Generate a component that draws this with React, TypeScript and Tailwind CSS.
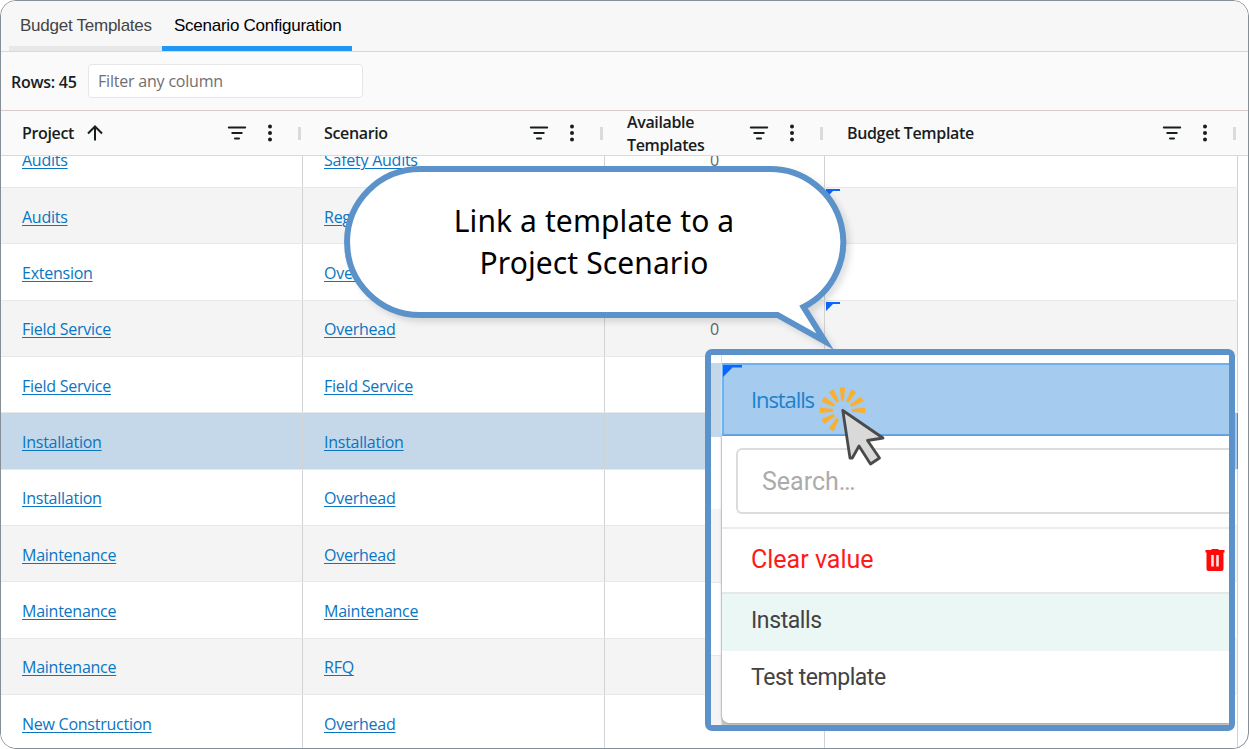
import React from 'react';
import clsx from 'clsx';

interface Row {
  project: string;
  scenario: string;
  available?: string;
  flagged?: boolean;
  selected?: boolean;
}

const rows: Row[] = [
  { project: 'Audits', scenario: 'Safety Audits', available: '0' },
  { project: 'Audits', scenario: 'Regulatory', flagged: true },
  { project: 'Extension', scenario: 'Overhead' },
  { project: 'Field Service', scenario: 'Overhead', available: '0', flagged: true },
  { project: 'Field Service', scenario: 'Field Service' },
  { project: 'Installation', scenario: 'Installation', selected: true },
  { project: 'Installation', scenario: 'Overhead' },
  { project: 'Maintenance', scenario: 'Overhead' },
  { project: 'Maintenance', scenario: 'Maintenance' },
  { project: 'Maintenance', scenario: 'RFQ' },
  { project: 'New Construction', scenario: 'Overhead' },
];

const rays = [0, 30, 60, 90, 120, 150, 180, 210, 240];

function FilterIcon() {
  return (
    <svg width="20" height="16" viewBox="0 0 20 16" stroke="#181d1f" strokeWidth="2" strokeLinecap="round">
      <path d="M1.8 2.5h16.4M5.3 8h9.4M8 13.5h4" />
    </svg>
  );
}

function MenuIcon() {
  return (
    <svg width="4" height="18" viewBox="0 0 4 18" fill="#181d1f">
      <circle cx="2" cy="2.5" r="2" />
      <circle cx="2" cy="9" r="2" />
      <circle cx="2" cy="15.5" r="2" />
    </svg>
  );
}

function HeaderCell({ className, children }: { className: string; children: React.ReactNode }) {
  return (
    <div className={clsx('flex shrink-0 items-center', className)}>
      <div className="flex flex-1 items-center gap-[13px] leading-[23px]">{children}</div>
      <FilterIcon />
      <div className="ml-[21px] mr-[26px] flex">
        <MenuIcon />
      </div>
      <div className="h-[13px] w-[3px] bg-[#dadada]" />
    </div>
  );
}

function LinkCell({ text }: { text: string }) {
  return (
    <div className="flex w-[302px] shrink-0 items-center border-r border-[#d0d2d4] pl-[21px] pt-0.5">
      <a className="whitespace-nowrap text-[#0a75c2] underline decoration-1 underline-offset-2">{text}</a>
    </div>
  );
}

function GridRow({ row, odd }: { row: Row; odd: boolean }) {
  return (
    <div
      className={clsx(
        'flex h-[56.36px] w-[1237px] shrink-0 border-b border-[#e8e8e8]',
        row.selected ? 'bg-[#c4d8e9]' : odd ? 'bg-[#f4f4f4]' : 'bg-white',
      )}
    >
      <LinkCell text={row.project} />
      <LinkCell text={row.scenario} />
      <div className="flex w-[220px] shrink-0 items-center justify-center border-r border-[#d0d2d4] pt-0.5 text-[#5f6368]">
        {row.available}
      </div>
      <div
        className={clsx(
          'flex-1 border-r pl-px pt-px',
          row.selected ? 'border-[#2196f3] bg-[#a5cbee]' : 'border-[#d0d2d4]',
        )}
      >
        {row.flagged && (
          <svg width="14" height="9" viewBox="0 0 14 9" fill="#0a66ff">
            <path d="M0 0h14v2H7L0 9z" />
          </svg>
        )}
      </div>
    </div>
  );
}

function Callout() {
  return (
    <div className="absolute left-[343px] top-[165px] h-[190px] w-[520px]">
      <svg
        className="absolute inset-0 drop-shadow-[4px_4px_3px_rgba(0,0,0,0.12)]"
        width="520"
        height="190"
        viewBox="343 165 520 190"
      >
        <path
          d="M420 169H770A73 73 0 0 1 803.5 307L825 341.500L777.500 315H420A73 73 0 0 1 420 169Z"
          fill="#fff"
          stroke="#5b92ca"
          strokeWidth="6"
          strokeMiterlimit="8"
        />
      </svg>
      <p className="relative w-[502px] pt-[35px] text-center font-['Noto_Sans','Open_Sans',sans-serif] text-[30px] leading-[42px] text-black">
        <span className="tracking-[0.1px]">Link a template to a</span>
        <br />
        <span className="tracking-[0.1px]">Project Scenario</span>
      </p>
    </div>
  );
}

function TrashIcon() {
  return (
    <svg width="20" height="22" viewBox="0 0 20 22">
      <path d="M.5 1H6l1-1h6l1 1h5.500v2.500H18.500V20q0 2-2 2h-13q-2 0-2-2V3.500H.5z" fill="#ff0a0a" />
      <path d="M7.500 6v11.500M12.500 6v11.500" stroke="#ffe1e1" strokeWidth="2.600" />
    </svg>
  );
}

function ClickCursor() {
  return (
    <svg className="absolute left-[814px] top-[381px]" width="76" height="90" viewBox="814 381 76 90">
      <g fill="#faaf2f">
        {rays.map((angle) => (
          <path
            key={angle}
            d="M9.500 -1.400L22.700 -2.700V2.700L9.500 1.400Z"
            transform={`translate(842.500 410.300) rotate(${-angle})`}
          />
        ))}
      </g>
      <path
        d="M842.800 410.500L883 438L867.500 440.500L879.500 458L870.500 464L859 446L852.300 458L850 458Z"
        fill="#d9d9d9"
        stroke="#4a4a4a"
        strokeWidth="2.800"
        strokeLinejoin="round"
      />
    </svg>
  );
}

function TemplatePopup() {
  return (
    <div className="absolute left-[705px] top-[349px] flex h-[382px] w-[530px] overflow-hidden rounded-[7px] border-6 border-[#5b92ca] bg-white">
      {/* slice of the neighbouring column */}
      <div className="flex w-[11px] shrink-0 flex-col border-r border-[#dedede] pt-2">
        <div className="h-[74px] bg-[#c4d8e9]" />
        <div className="h-[72px] bg-white" />
        <div className="h-[74px] border-b border-[#e8e8e8] bg-[#f4f4f4]" />
        <div className="h-[72px] bg-white" />
        <div className="flex-1 border-t border-[#e8e8e8] bg-[#f4f4f4]" />
      </div>
      <div className="flex flex-1 flex-col bg-[#c9c9c7]">
        <div className="h-2 bg-white" />
        <div className="flex h-[73px] items-center border-y-2 border-l-2 border-[#6db2f0] bg-[#a5cbee]">
          <svg className="-ml-px self-start" width="19" height="12" viewBox="0 0 19 12" fill="#0a66ff">
            <path d="M0 0h19v2.500H9.500L0 12z" />
          </svg>
          <span className="ml-[9px] font-['Open_Sans','Noto_Sans',sans-serif] text-[22px] font-medium tracking-[-1.1px] text-[#1c81cd]">
            Installs
          </span>
        </div>
        <div className="flex h-[287px] flex-col rounded-bl-[7px] bg-white font-['Roboto',sans-serif] shadow-[0_0_3px_rgba(0,0,0,0.35)]">
          <div className="h-[93px] border-b-2 border-[#ececec] pl-[14px] pt-3">
            <div className="flex h-[66px] items-center rounded-l-[6px] border-2 border-r-0 border-[#dcdcdc] pl-6 pt-0.5 text-[25px] text-[#ababab]">
              Search…
            </div>
          </div>
          <div className="flex h-[65px] items-center justify-between border-b-2 border-[#e4e8e6] pb-0.5 pl-[29px] pr-1 text-[25px] text-[#ff1a1a]">
            Clear value
            <TrashIcon />
          </div>
          <div className="flex h-[57px] items-center bg-[#ebf7f4] pb-0.5 pl-[29px] text-[23px] tracking-[-0.4px] text-[#424242]">
            Installs
          </div>
          <div className="flex h-[57px] items-center pb-0.5 pl-[29px] text-[23px] tracking-[-0.45px] text-[#424242]">
            Test template
          </div>
        </div>
      </div>
    </div>
  );
}

export default function App() {
  return (
    <div className="relative h-[749px] w-[1249px] bg-white">
      <div className="flex h-full flex-col overflow-hidden rounded-[16px] border border-[#868e96] bg-white font-['Open_Sans','Noto_Sans',sans-serif] text-[16px] tracking-[-0.25px]">
        {/* Tabs */}
        <div className="flex h-[51px] shrink-0 border-b border-[#d9d9d9] bg-[#f7f7f7] pl-2 font-['Liberation_Sans',sans-serif] text-[17px] tracking-[-0.25px]">
          <div className="flex w-[153px] items-center whitespace-nowrap border-b-5 border-[#e8e8e8] pl-[11px] pt-[5px] text-[#444]">
            Budget Templates
          </div>
          <div className="flex w-[190px] items-center whitespace-nowrap border-b-5 border-[#2196f3] pl-3 pt-[5px] text-black">
            Scenario Configuration
          </div>
        </div>

        {/* Toolbar */}
        <div className="flex h-[59px] shrink-0 items-center border-b border-[#d6cdcb] bg-[#fafafa] pl-[10px]">
          <span className="w-[77px] whitespace-nowrap pt-0.5 font-semibold text-[#181d1f]">Rows: 45</span>
          <div className="flex h-[34px] w-[275px] items-center rounded-[4px] border border-[#e6e6e6] bg-white pl-[9px] tracking-[-0.2px] text-[#6f6f6f]">
            Filter any column
          </div>
        </div>

        {/* Column headers */}
        <div className="flex h-[45px] shrink-0 border-b border-[#d9d9d9] bg-[#fafafa] font-semibold tracking-[-0.35px] text-[#181d1f]">
          <HeaderCell className="w-[300px] pl-[21px]">
            Project
            <svg width="16" height="16" viewBox="0 0 16 16" fill="none" stroke="#181d1f" strokeWidth="2">
              <path d="M8 15.500V1.500M1 8.500L8 1.500L15 8.500" />
            </svg>
          </HeaderCell>
          <HeaderCell className="w-[302px] pl-[23px]">Scenario</HeaderCell>
          <HeaderCell className="w-[220px] pl-[24px]">
            <span className="pt-px">
              Available
              <br />
              Templates
            </span>
          </HeaderCell>
          <HeaderCell className="w-[413px] pl-[24px]">Budget Template</HeaderCell>
        </div>

        {/* Rows */}
        <div className="min-h-0 flex-1 overflow-hidden">
          <div className="-mt-[24.500px] flex flex-col">
            {rows.map((row, i) => (
              <GridRow key={i} row={row} odd={i % 2 === 1} />
            ))}
          </div>
        </div>
      </div>

      <Callout />
      <TemplatePopup />
      <ClickCursor />
    </div>
  );
}
